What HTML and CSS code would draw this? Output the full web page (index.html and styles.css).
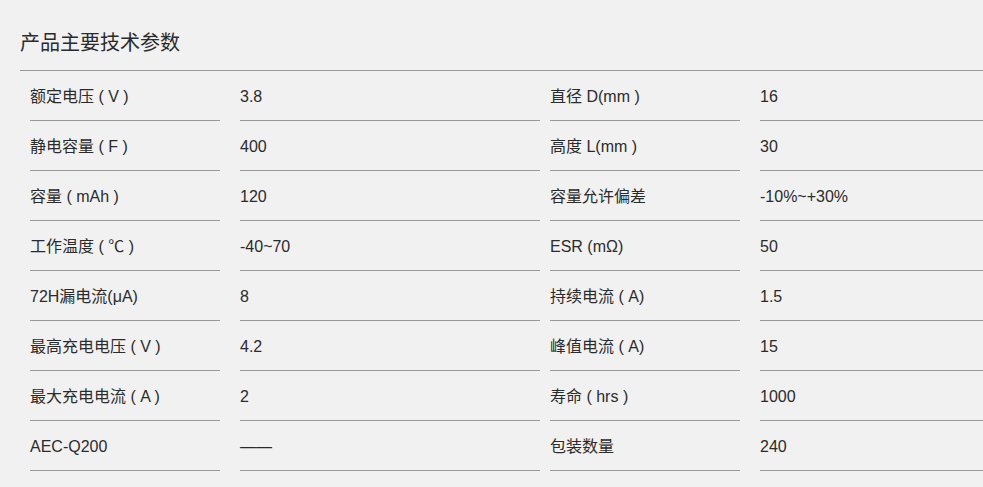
FILE: index.html
```html
<!DOCTYPE html>
<html lang="zh-CN">
<head>
<meta charset="utf-8">
<title>产品主要技术参数</title>
<link rel="stylesheet" href="styles.css">
</head>
<body>
<div class="wrap">
  <h2 class="title">产品主要技术参数</h2>
  <div class="specs">
    <div class="k">额定电压 ( V )</div><div class="v">3.8</div>
    <div class="k">直径 D(mm )</div><div class="v">16</div>

    <div class="k">静电容量 ( F )</div><div class="v">400</div>
    <div class="k">高度 L(mm )</div><div class="v">30</div>

    <div class="k">容量 ( mAh )</div><div class="v">120</div>
    <div class="k">容量允许偏差</div><div class="v">-10%~+30%</div>

    <div class="k">工作温度 ( ℃ )</div><div class="v">-40~70</div>
    <div class="k">ESR (mΩ)</div><div class="v">50</div>

    <div class="k">72H漏电流(μA)</div><div class="v">8</div>
    <div class="k">持续电流 ( A)</div><div class="v">1.5</div>

    <div class="k">最高充电电压 ( V )</div><div class="v">4.2</div>
    <div class="k">峰值电流 ( A)</div><div class="v">15</div>

    <div class="k">最大充电电流 ( A )</div><div class="v">2</div>
    <div class="k">寿命 ( hrs )</div><div class="v">1000</div>

    <div class="k">AEC-Q200</div><div class="v">——</div>
    <div class="k">包装数量</div><div class="v">240</div>
  </div>
</div>
</body>
</html>
```

FILE: styles.css
```css
html, body {
  margin: 0;
  padding: 0;
  background: #f1f1f1;
}

body {
  font-family: "Liberation Sans", Arial, "Noto Sans CJK SC", sans-serif;
  color: #2b2b2b;
}

.wrap {
  margin-left: 20px;
}

.title {
  margin: 0;
  padding: 28px 0 12px 0;
  font-size: 20px;
  line-height: 30px;
  font-weight: normal;
  color: #2b2b2b;
  border-bottom: 1px solid #999;
}

.specs {
  display: grid;
  grid-template-columns: 200px 320px 200px 1fr;
}

.k, .v {
  box-sizing: border-box;
  height: 50px;
  padding-top: 14px;
  font-size: 16px;
  line-height: 24px;
  white-space: nowrap;
  border-bottom: 1px solid #999;
}

.k {
  margin-left: 10px;
}

.v {
  margin-left: 20px;
}
```
